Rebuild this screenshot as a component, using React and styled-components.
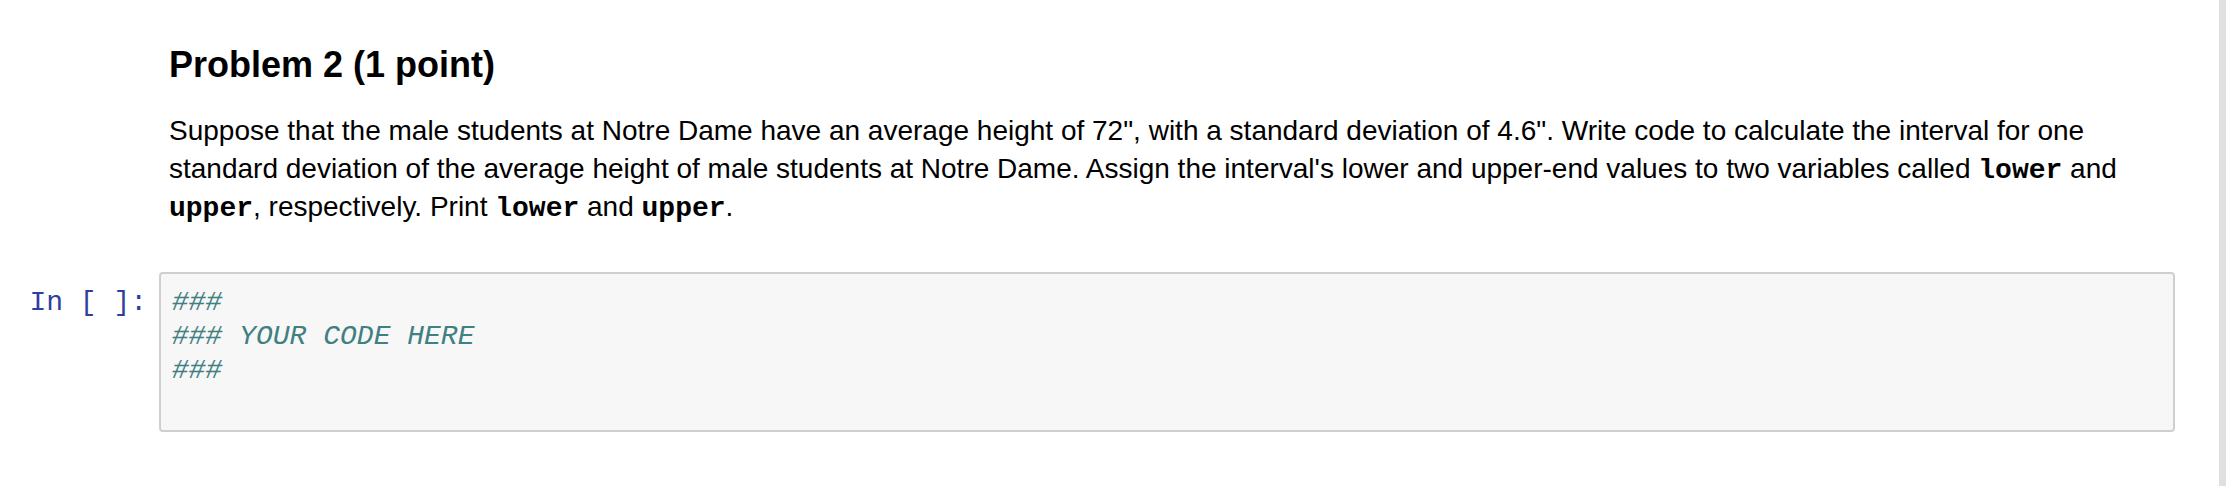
import React from 'react';
import styled, { createGlobalStyle } from 'styled-components';

const GlobalStyle = createGlobalStyle`
  html, body {
    margin: 0;
    padding: 0;
    background: #fff;
  }
  body {
    font-family: "Liberation Sans", Arial, sans-serif;
    color: #000;
  }
`;

const Page = styled.div`
  display: flex;
  height: 486px;
  overflow: hidden;
`;

const Notebook = styled.div`
  flex: 1;
  display: flex;
  flex-direction: column;
  padding: 44px 44px 0 0;
`;

const ScrollTrack = styled.div`
  width: 7px;
  background: #e0e0e0;
`;

const Cell = styled.div`
  display: flex;
  align-items: flex-start;
  margin-top: ${p => p.gap || 0}px;
`;

const Prompt = styled.div`
  width: 159px;
  flex-shrink: 0;
  box-sizing: border-box;
  padding: 14px 12px 0 0;
  text-align: right;
  font-family: "Liberation Mono", "Courier New", monospace;
  font-size: 28px;
  line-height: 34px;
  color: #303f9f;
  white-space: pre;
`;

const Markdown = styled.div`
  flex: 1;
  padding: 0 10px;
`;

const Heading = styled.h2`
  margin: 0;
  font-size: 36px;
  line-height: 42px;
  font-weight: bold;
`;

const Para = styled.p`
  margin: 26px 0 0;
  font-size: 28px;
  line-height: 38px;
`;

const InlineCode = styled.code`
  font-family: "Liberation Mono", "Courier New", monospace;
  font-weight: bold;
  font-size: 28px;
  line-height: 1;
`;

const Editor = styled.div`
  flex: 1;
  background: #f7f7f7;
  border: 2px solid #cfcfcf;
  border-radius: 4px;
  padding: 12px 11px 8px;
`;

const CodeLine = styled.div`
  font-family: "Liberation Mono", "Courier New", monospace;
  font-size: 28px;
  line-height: 34px;
  height: 34px;
  white-space: pre;
  font-style: italic;
  color: #408080;
`;

const code = ['###', '### YOUR CODE HERE', '###', ''];

export default function App() {
  return (
    <Page>
      <GlobalStyle />
      <Notebook>
        <Cell>
          <Prompt />
          <Markdown>
            <Heading>Problem 2 (1 point)</Heading>
            <Para>
              Suppose that the male students at Notre Dame have an average height of 72", with a standard
              deviation of 4.6". Write code to calculate the interval for one standard deviation of the average
              height of male students at Notre Dame. Assign the interval's lower and upper-end values to two
              variables called <InlineCode>lower</InlineCode> and <InlineCode>upper</InlineCode>, respectively.
              Print <InlineCode>lower</InlineCode> and <InlineCode>upper</InlineCode>.
            </Para>
          </Markdown>
        </Cell>
        <Cell gap={46}>
          <Prompt>In [ ]:</Prompt>
          <Editor>
            {code.map((line, i) => (
              <CodeLine key={i}>{line}</CodeLine>
            ))}
          </Editor>
        </Cell>
      </Notebook>
      <ScrollTrack />
    </Page>
  );
}
